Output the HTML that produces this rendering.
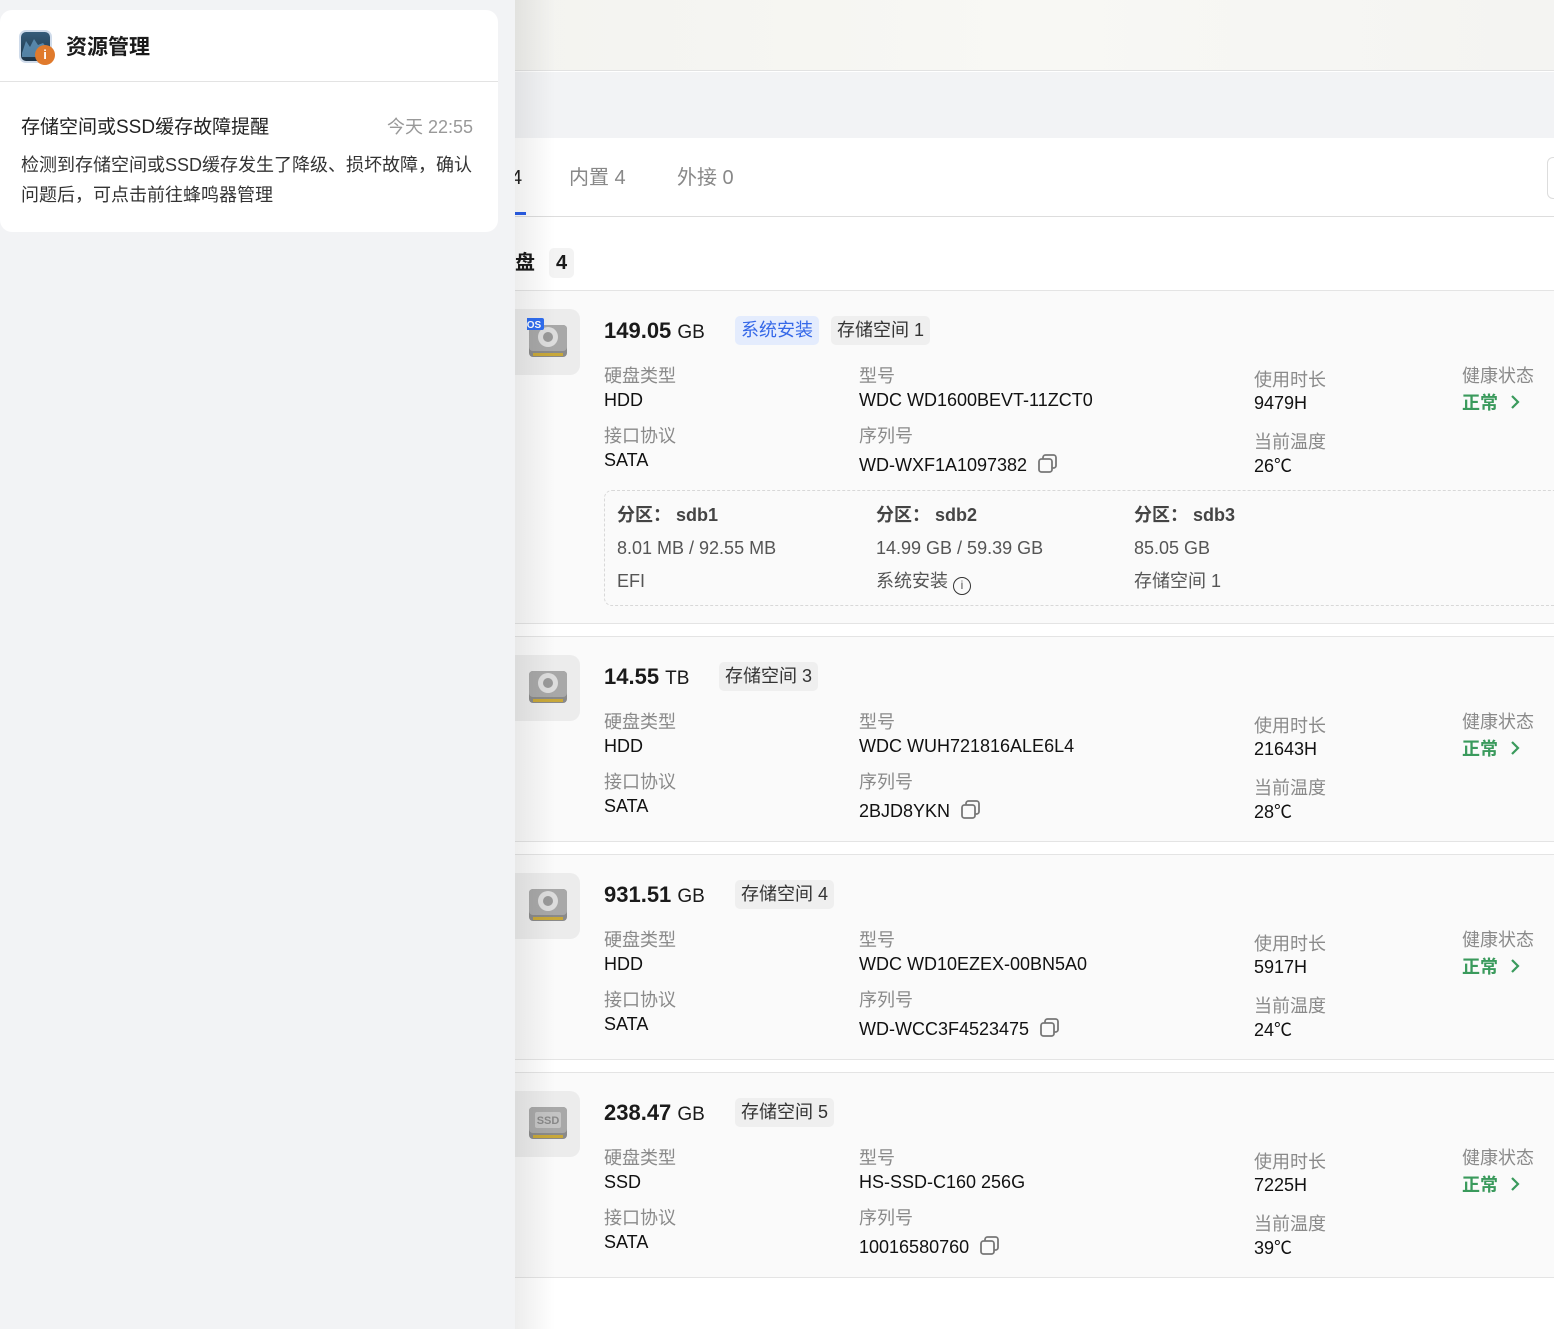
<!DOCTYPE html>
<html><head><meta charset="utf-8"><style>
*{margin:0;padding:0;box-sizing:border-box}
body{width:1554px;height:1329px;overflow:hidden;position:relative;background:#f2f3f5;font-family:"Liberation Sans","Noto Sans CJK SC",sans-serif;color:#1a1a1a}
.a{position:absolute;white-space:nowrap;line-height:1}
.right{position:absolute;left:515px;top:0;width:1039px;height:1329px;background:#fff;overflow:hidden}
.shadow{position:absolute;left:515px;top:0;width:40px;height:1329px;background:linear-gradient(90deg,rgba(0,0,0,0.07),rgba(0,0,0,0));z-index:5}
.card{position:absolute;left:0;width:1039px;background:#fafafa;border-top:1px solid #e4e4e4;border-bottom:1px solid #e4e4e4}
.lbl{font-size:18px;color:#8a8a8a}
.val{font-size:18px;color:#111}
.tag{position:absolute;height:29px;line-height:29px;padding:0 6px;font-size:18px;border-radius:5px;background:#efefef;color:#333;white-space:nowrap}
.icon{position:absolute;left:0;width:65px;height:66px;background:#ececec;border-radius:0 10px 10px 0}
.ok{font-size:18px;color:#3a9a5c;font-weight:bold}
.cp{display:inline-block;vertical-align:-4px;margin-left:10px}
.chev{display:inline-block;vertical-align:-1px;margin-left:12px}
</style></head><body>
<div class="a" style="left:0;top:10px;width:498px;height:222px;background:#fff;border-radius:12px"></div>
<div class="a" style="left:0;top:81px;width:498px;height:1px;background:#e3e3e3"></div>
<div class="a" style="left:19px;top:30px;width:33px;height:33px;border-radius:7px;background:linear-gradient(#355c7a,#1e3446);border:2px solid #cfdbea"></div>
<svg class="a" style="left:21px;top:35px" width="28" height="22"><path d="M1 18 L5 6 L9 12 L13 4 L17 10 L22 8 L27 14 L27 22 L1 22Z" fill="#6aa0c8" opacity=".7"/></svg>
<div class="a" style="left:35px;top:45px;width:20px;height:20px;border-radius:50%;background:#e07a2c;color:#fff;font-size:13px;text-align:center;line-height:20px;font-weight:bold">i</div>
<div class="a" style="left:66px;top:37px;font-size:21px;font-weight:bold">资源管理</div>
<div class="a" style="left:21px;top:118px;font-size:19px;color:#222">存储空间或SSD缓存故障提醒</div>
<div class="a" style="left:387px;top:118px;font-size:18px;color:#999">今天 22:55</div>
<div class="a" style="left:21px;top:150px;font-size:18px;color:#333;line-height:30px;white-space:normal;width:460px">检测到存储空间或SSD缓存发生了降级、损坏故障，确认问题后，可点击前往蜂鸣器管理</div>

<div class="right">
  <div class="a" style="left:0;top:0;width:1039px;height:71px;background:linear-gradient(90deg,#f3f3f0,#f8f8f4,#f4f4f2);border-bottom:1px solid #e2e2e2"></div>
  <div class="a" style="left:0;top:72px;width:1039px;height:66px;background:#f2f3f5"></div>
  <div class="a" style="left:-4px;top:168px;font-size:20px;color:#222">4</div>
  <div class="a" style="left:0;top:212px;width:11px;height:3px;background:#2a5ee8"></div>
  <div class="a" style="left:54px;top:168px;font-size:20px;color:#888">内置 4</div>
  <div class="a" style="left:162px;top:168px;font-size:20px;color:#888">外接 0</div>
  <div class="a" style="left:1032px;top:157px;width:20px;height:42px;border:1px solid #ddd;border-radius:6px"></div>
  <div class="a" style="left:0;top:216px;width:1039px;height:1px;background:#ddd"></div>
  <div class="a" style="left:0;top:253px;font-size:20px;font-weight:bold">盘</div>
  <div class="a" style="left:34px;top:248px;width:25px;height:30px;background:#f3f3f3;border-radius:5px;font-size:20px;font-weight:bold;text-align:center;line-height:30px">4</div>

  <div class="card" style="top:290px;height:334px">
    <div class="icon" style="top:18px"></div>
    <svg class="a" style="left:12px;top:26px" width="42" height="44"><rect x="2" y="8" width="38" height="32" rx="4" fill="#8a8a8a"/><rect x="2" y="8" width="38" height="26" rx="4" fill="#a8a8a8"/><circle cx="21" cy="20" r="10" fill="#ddd"/><circle cx="21" cy="20" r="5" fill="#999"/><rect x="6" y="36" width="30" height="3" fill="#c8a83a"/><rect x="-3" y="1" width="20" height="12" rx="2" fill="#2f6df0"/><text x="7" y="11" font-size="10" fill="#fff" text-anchor="middle" font-family="Liberation Sans" font-weight="bold">OS</text></svg>
    <div class="a" style="left:89px;top:29px;font-size:22px;font-weight:bold">149.05 <span style="font-weight:normal;font-size:19px">GB</span></div>
    <div class="tag" style="left:220px;top:25px;background:#e4ecfd;color:#3568e8">系统安装</div>
    <div class="tag" style="left:316px;top:25px">存储空间 1</div>
    <div class="a lbl" style="left:89px;top:76px">硬盘类型</div><div class="a val" style="left:89px;top:100px">HDD</div>
    <div class="a lbl" style="left:89px;top:136px">接口协议</div><div class="a val" style="left:89px;top:160px">SATA</div>
    <div class="a lbl" style="left:344px;top:76px">型号</div><div class="a val" style="left:344px;top:100px">WDC WD1600BEVT-11ZCT0</div>
    <div class="a lbl" style="left:344px;top:136px">序列号</div><div class="a val" style="left:344px;top:162px">WD-WXF1A1097382<svg class="cp" width="22" height="22" viewBox="0 0 22 22"><rect x="6" y="2" width="13" height="13" rx="2.5" fill="none" stroke="#777" stroke-width="1.8"/><rect x="2" y="6" width="13" height="13" rx="2.5" fill="#fafafa" stroke="#777" stroke-width="1.8"/></svg></div>
    <div class="a lbl" style="left:739px;top:80px">使用时长</div><div class="a val" style="left:739px;top:103px">9479H</div>
    <div class="a lbl" style="left:739px;top:142px">当前温度</div><div class="a val" style="left:739px;top:166px">26℃</div>
    <div class="a lbl" style="left:947px;top:76px">健康状态</div><div class="a ok" style="left:947px;top:103px">正常<svg class="chev" width="10" height="16"><path d="M2 2 L8 8 L2 14" fill="none" stroke="#3a9a5c" stroke-width="2.2"/></svg></div>
    <div class="a" style="left:89px;top:199px;width:960px;height:116px;border:1px dashed #d8d8d8;border-radius:8px"></div>
    <div class="a" style="left:102px;top:215px;font-size:18px;font-weight:bold;color:#444">分区：&nbsp;sdb1</div>
    <div class="a" style="left:102px;top:248px;font-size:18px;color:#555">8.01 MB / 92.55 MB</div>
    <div class="a" style="left:102px;top:281px;font-size:18px;color:#555">EFI</div>
    <div class="a" style="left:361px;top:215px;font-size:18px;font-weight:bold;color:#444">分区：&nbsp;sdb2</div>
    <div class="a" style="left:361px;top:248px;font-size:18px;color:#555">14.99 GB / 59.39 GB</div>
    <div class="a" style="left:361px;top:281px;font-size:18px;color:#555">系统安装 <span style="display:inline-block;width:18px;height:18px;border:1.5px solid #333;border-radius:50%;font-size:12px;text-align:center;line-height:15px;vertical-align:-2px">i</span></div>
    <div class="a" style="left:619px;top:215px;font-size:18px;font-weight:bold;color:#444">分区：&nbsp;sdb3</div>
    <div class="a" style="left:619px;top:248px;font-size:18px;color:#555">85.05 GB</div>
    <div class="a" style="left:619px;top:281px;font-size:18px;color:#555">存储空间 1</div>
  </div>

  <div class="card" style="top:636px;height:206px">
    <div class="icon" style="top:18px"></div>
    <svg class="a" style="left:12px;top:28px" width="42" height="42"><rect x="2" y="6" width="38" height="32" rx="4" fill="#8a8a8a"/><rect x="2" y="6" width="38" height="26" rx="4" fill="#a8a8a8"/><circle cx="21" cy="18" r="10" fill="#ddd"/><circle cx="21" cy="18" r="5" fill="#999"/><rect x="6" y="34" width="30" height="3" fill="#c8a83a"/></svg>
    <div class="a" style="left:89px;top:29px;font-size:22px;font-weight:bold">14.55 <span style="font-weight:normal;font-size:19px">TB</span></div>
    <div class="tag" style="left:204px;top:25px">存储空间 3</div>
    <div class="a lbl" style="left:89px;top:76px">硬盘类型</div><div class="a val" style="left:89px;top:100px">HDD</div>
    <div class="a lbl" style="left:89px;top:136px">接口协议</div><div class="a val" style="left:89px;top:160px">SATA</div>
    <div class="a lbl" style="left:344px;top:76px">型号</div><div class="a val" style="left:344px;top:100px">WDC WUH721816ALE6L4</div>
    <div class="a lbl" style="left:344px;top:136px">序列号</div><div class="a val" style="left:344px;top:162px">2BJD8YKN<svg class="cp" width="22" height="22" viewBox="0 0 22 22"><rect x="6" y="2" width="13" height="13" rx="2.5" fill="none" stroke="#777" stroke-width="1.8"/><rect x="2" y="6" width="13" height="13" rx="2.5" fill="#fafafa" stroke="#777" stroke-width="1.8"/></svg></div>
    <div class="a lbl" style="left:739px;top:80px">使用时长</div><div class="a val" style="left:739px;top:103px">21643H</div>
    <div class="a lbl" style="left:739px;top:142px">当前温度</div><div class="a val" style="left:739px;top:166px">28℃</div>
    <div class="a lbl" style="left:947px;top:76px">健康状态</div><div class="a ok" style="left:947px;top:103px">正常<svg class="chev" width="10" height="16"><path d="M2 2 L8 8 L2 14" fill="none" stroke="#3a9a5c" stroke-width="2.2"/></svg></div>
  </div>

  <div class="card" style="top:854px;height:206px">
    <div class="icon" style="top:18px"></div>
    <svg class="a" style="left:12px;top:28px" width="42" height="42"><rect x="2" y="6" width="38" height="32" rx="4" fill="#8a8a8a"/><rect x="2" y="6" width="38" height="26" rx="4" fill="#a8a8a8"/><circle cx="21" cy="18" r="10" fill="#ddd"/><circle cx="21" cy="18" r="5" fill="#999"/><rect x="6" y="34" width="30" height="3" fill="#c8a83a"/></svg>
    <div class="a" style="left:89px;top:29px;font-size:22px;font-weight:bold">931.51 <span style="font-weight:normal;font-size:19px">GB</span></div>
    <div class="tag" style="left:220px;top:25px">存储空间 4</div>
    <div class="a lbl" style="left:89px;top:76px">硬盘类型</div><div class="a val" style="left:89px;top:100px">HDD</div>
    <div class="a lbl" style="left:89px;top:136px">接口协议</div><div class="a val" style="left:89px;top:160px">SATA</div>
    <div class="a lbl" style="left:344px;top:76px">型号</div><div class="a val" style="left:344px;top:100px">WDC WD10EZEX-00BN5A0</div>
    <div class="a lbl" style="left:344px;top:136px">序列号</div><div class="a val" style="left:344px;top:162px">WD-WCC3F4523475<svg class="cp" width="22" height="22" viewBox="0 0 22 22"><rect x="6" y="2" width="13" height="13" rx="2.5" fill="none" stroke="#777" stroke-width="1.8"/><rect x="2" y="6" width="13" height="13" rx="2.5" fill="#fafafa" stroke="#777" stroke-width="1.8"/></svg></div>
    <div class="a lbl" style="left:739px;top:80px">使用时长</div><div class="a val" style="left:739px;top:103px">5917H</div>
    <div class="a lbl" style="left:739px;top:142px">当前温度</div><div class="a val" style="left:739px;top:166px">24℃</div>
    <div class="a lbl" style="left:947px;top:76px">健康状态</div><div class="a ok" style="left:947px;top:103px">正常<svg class="chev" width="10" height="16"><path d="M2 2 L8 8 L2 14" fill="none" stroke="#3a9a5c" stroke-width="2.2"/></svg></div>
  </div>

  <div class="card" style="top:1072px;height:206px">
    <div class="icon" style="top:18px"></div>
    <svg class="a" style="left:12px;top:28px" width="42" height="42"><rect x="2" y="6" width="38" height="32" rx="4" fill="#8a8a8a"/><rect x="2" y="6" width="38" height="26" rx="4" fill="#a8a8a8"/><rect x="8" y="11" width="26" height="16" rx="2" fill="#c4c4c4"/><text x="21" y="23" font-size="11" fill="#888" text-anchor="middle" font-family="Liberation Sans" font-weight="bold">SSD</text><rect x="6" y="34" width="30" height="3" fill="#c8a83a"/></svg>
    <div class="a" style="left:89px;top:29px;font-size:22px;font-weight:bold">238.47 <span style="font-weight:normal;font-size:19px">GB</span></div>
    <div class="tag" style="left:220px;top:25px">存储空间 5</div>
    <div class="a lbl" style="left:89px;top:76px">硬盘类型</div><div class="a val" style="left:89px;top:100px">SSD</div>
    <div class="a lbl" style="left:89px;top:136px">接口协议</div><div class="a val" style="left:89px;top:160px">SATA</div>
    <div class="a lbl" style="left:344px;top:76px">型号</div><div class="a val" style="left:344px;top:100px">HS-SSD-C160 256G</div>
    <div class="a lbl" style="left:344px;top:136px">序列号</div><div class="a val" style="left:344px;top:162px">10016580760<svg class="cp" width="22" height="22" viewBox="0 0 22 22"><rect x="6" y="2" width="13" height="13" rx="2.5" fill="none" stroke="#777" stroke-width="1.8"/><rect x="2" y="6" width="13" height="13" rx="2.5" fill="#fafafa" stroke="#777" stroke-width="1.8"/></svg></div>
    <div class="a lbl" style="left:739px;top:80px">使用时长</div><div class="a val" style="left:739px;top:103px">7225H</div>
    <div class="a lbl" style="left:739px;top:142px">当前温度</div><div class="a val" style="left:739px;top:166px">39℃</div>
    <div class="a lbl" style="left:947px;top:76px">健康状态</div><div class="a ok" style="left:947px;top:103px">正常<svg class="chev" width="10" height="16"><path d="M2 2 L8 8 L2 14" fill="none" stroke="#3a9a5c" stroke-width="2.2"/></svg></div>
  </div>
</div>
<div class="shadow"></div>
</body></html>
